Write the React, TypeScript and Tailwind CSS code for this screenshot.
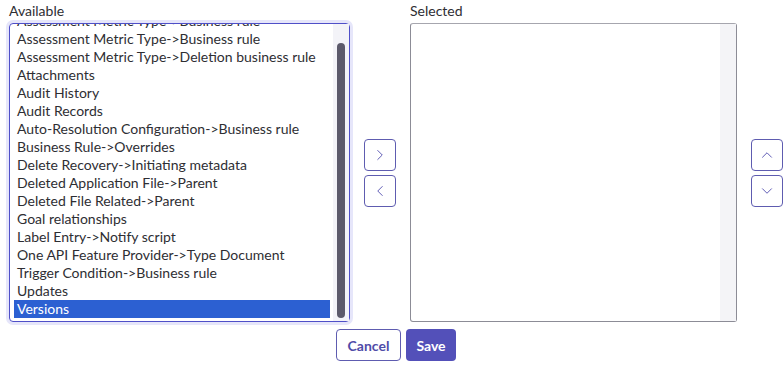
import { ChevronRight, ChevronLeft, ChevronUp, ChevronDown } from "lucide-react";

const available = [
  "Assessment Metric Type->Business rule",
  "Assessment Metric Type->Business rule",
  "Assessment Metric Type->Deletion business rule",
  "Attachments",
  "Audit History",
  "Audit Records",
  "Auto-Resolution Configuration->Business rule",
  "Business Rule->Overrides",
  "Delete Recovery->Initiating metadata",
  "Deleted Application File->Parent",
  "Deleted File Related->Parent",
  "Goal relationships",
  "Label Entry->Notify script",
  "One API Feature Provider->Type Document",
  "Trigger Condition->Business rule",
  "Updates",
  "Versions",
];

function MoveButton({ children }: { children: React.ReactNode }) {
  return (
    <button className="flex h-[32px] w-[32px] items-center justify-center rounded-[4px] border border-[#5e5cb0] bg-white text-[#5552b0]">
      {children}
    </button>
  );
}

export default function App() {
  return (
    <div className="h-[365px] w-[784px] bg-white font-['Lato','Open_Sans',sans-serif] text-[14px] text-[#2e2e33]">
      <div className="flex pl-[9px]">
        <div className="flex w-[341px] flex-col">
          <div className="h-[23px] pt-[1px] leading-[20px]">Available</div>
          <div className="flex h-[299px] rounded-[4px] border border-[#4f4fc8] shadow-[0_0_0_3px_#e6e6fa]">
            <div className="flex min-w-0 flex-1 flex-col justify-end overflow-hidden pb-[3px] pl-[4px]">
              {available.map((item, i) => (
                <div
                  key={i}
                  className={`h-[18px] shrink-0 whitespace-nowrap pl-[3px] leading-[18px] ${
                    item === "Versions" ? "bg-[#2c60d2] text-white" : ""
                  }`}
                >
                  {item}
                </div>
              ))}
            </div>
            <div className="ml-[3px] flex w-[16px] shrink-0 justify-center bg-[#f3f3f8] pb-[3px] pt-[19px]">
              <div className="w-[8px] rounded-full bg-[#5c5a6b]" />
            </div>
          </div>
        </div>

        <div className="mt-[23px] flex w-[60px] flex-col items-center justify-center gap-[4px] pt-[1px]">
          <MoveButton>
            <ChevronRight size={18} strokeWidth={1.25} />
          </MoveButton>
          <MoveButton>
            <ChevronLeft size={18} strokeWidth={1.25} />
          </MoveButton>
        </div>

        <div className="flex w-[327px] flex-col">
          <div className="h-[23px] pt-[1px] leading-[20px]">Selected</div>
          <div className="flex h-[299px] rounded-[3px] border border-[#8c8c96] border-t-[#a6a6ae]">
            <div className="flex-1" />
            <div className="w-[16px] bg-[#f4f4f7]" />
          </div>
        </div>

        <div className="ml-[14px] mt-[23px] flex w-[32px] flex-col items-center justify-center gap-[4px] pt-[1px]">
          <MoveButton>
            <ChevronUp size={18} strokeWidth={1.25} />
          </MoveButton>
          <MoveButton>
            <ChevronDown size={18} strokeWidth={1.25} />
          </MoveButton>
        </div>
      </div>

      <div className="mt-[7px] flex justify-center gap-[5px] pl-[8px]">
        <button className="h-[32px] w-[65px] rounded-[4px] border border-[#5e5cb0] bg-white font-bold text-[#4f4ca8]">
          Cancel
        </button>
        <button className="h-[32px] w-[50px] rounded-[4px] bg-[#5350b9] font-bold text-white">
          Save
        </button>
      </div>
    </div>
  );
}
